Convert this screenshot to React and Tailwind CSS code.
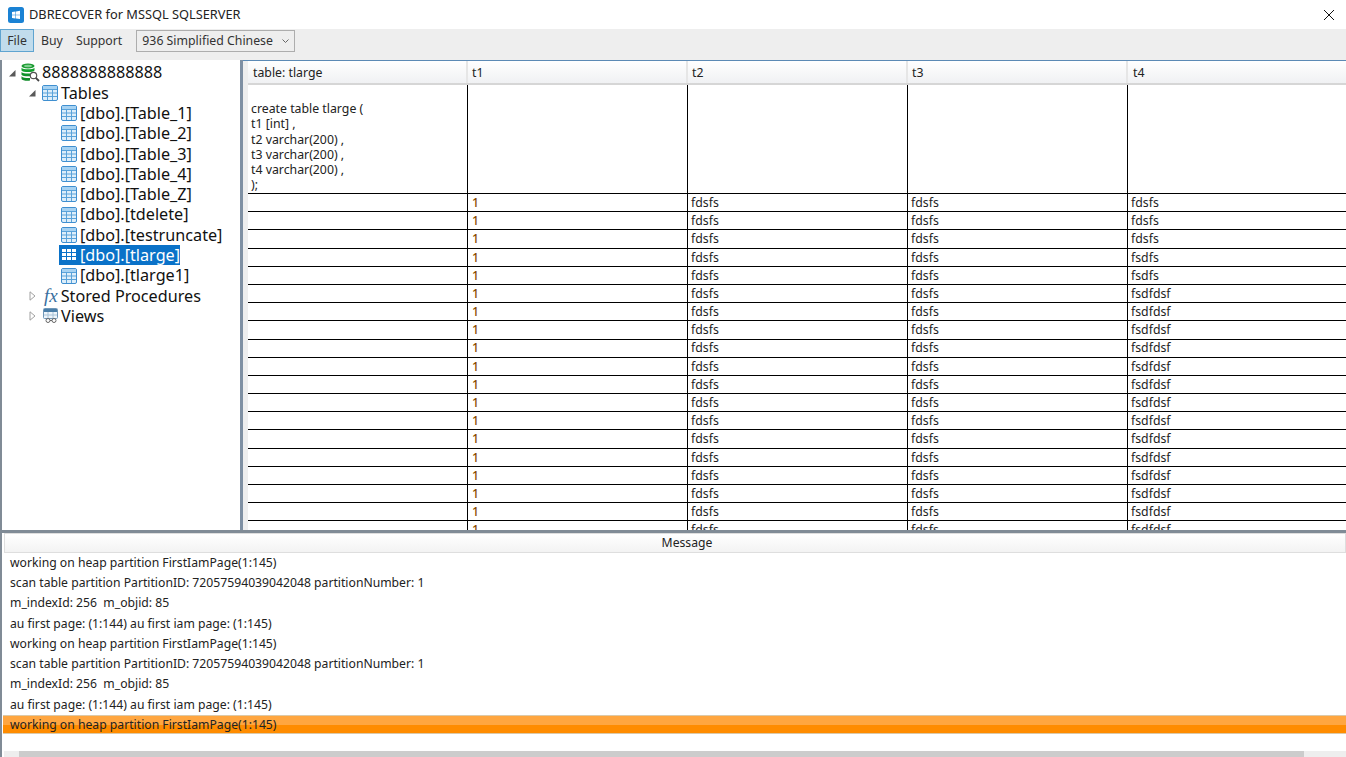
const tables = ["[dbo].[Table_1]","[dbo].[Table_2]","[dbo].[Table_3]","[dbo].[Table_4]","[dbo].[Table_Z]","[dbo].[tdelete]","[dbo].[testruncate]","[dbo].[tlarge]","[dbo].[tlarge1]"];
const logs = ["working on heap partition FirstIamPage(1:145)","scan table partition PartitionID: 72057594039042048 partitionNumber: 1","m_indexId: 256  m_objid: 85","au first page: (1:144) au first iam page: (1:145)","working on heap partition FirstIamPage(1:145)","scan table partition PartitionID: 72057594039042048 partitionNumber: 1","m_indexId: 256  m_objid: 85","au first page: (1:144) au first iam page: (1:145)"];
const rows = Array.from({length:19},(_,i)=>i<3?["fdsfs","fdsfs","fdsfs"]:i<5?["fdsfs","fdsfs","fsdfs"]:["fdsfs","fdsfs","fsdfdsf"]);

function TableIcon({selected}) {
  if (selected) {
    return (
      <svg width="16" height="16" viewBox="0 0 16 16" className="shrink-0">
        <g fill="#ffffff">
          <rect x="1" y="2" width="4" height="3" /><rect x="6" y="2" width="4" height="3" /><rect x="11" y="2" width="4" height="3" />
          <rect x="1" y="6" width="4" height="3" /><rect x="6" y="6" width="4" height="3" /><rect x="11" y="6" width="4" height="3" />
          <rect x="1" y="10" width="4" height="3" /><rect x="6" y="10" width="4" height="3" /><rect x="11" y="10" width="4" height="3" />
        </g>
      </svg>
    );
  }
  return (
    <svg width="16" height="16" viewBox="0 0 16 16" className="shrink-0">
      <rect x="0.500" y="0.500" width="15" height="15" rx="1.500" fill="#ddeefa" stroke="#3f8fd0" />
      <rect x="1" y="1" width="14" height="3.500" fill="#a6d2f2" />
      <path d="M1 4.500h14M1 8h14M1 11.500h14M5.500 4v11M10.500 4v11" stroke="#5aa3da" strokeWidth="1" fill="none" />
    </svg>
  );
}
function DbIcon() {
  return (
    <svg width="20" height="20" viewBox="0 0 20 20" className="shrink-0">
      <ellipse cx="7" cy="3" rx="6.500" ry="2.600" fill="#1c9a32" />
      <ellipse cx="7" cy="3" rx="4" ry="1.200" fill="#7fd08f" />
      <path d="M.5 4.800c1.500 2 11.500 2 13 0v2.800c-1.500 2-11.500 2-13 0z" fill="#12a02e" />
      <path d="M.5 9c1.500 2 11.500 2 13 0v2.800c-1.500 2-11.500 2-13 0z" fill="#0f9229" />
      <path d="M.5 13.200c1.500 2 7 2 8.500 1.800v2.500c-3 .5-8 0-8.500-1.600z" fill="#0f8a28" />
      <circle cx="12.500" cy="12.500" r="3.200" fill="#ffffff" stroke="#555555" strokeWidth="1.200" />
      <path d="M14.800 14.800L18 18" stroke="#444444" strokeWidth="1.800" />
    </svg>
  );
}
function ViewsIcon() {
  return (
    <svg width="16" height="16" viewBox="0 0 16 16" className="shrink-0">
      <rect x="0.500" y="0.500" width="14" height="10" rx="1" fill="#eef5fb" stroke="#6f97b8" />
      <rect x="1" y="1" width="13" height="3" fill="#4a7ea8" />
      <path d="M1 7h13M5 4v6M10 4v6" stroke="#a8c3d8" />
      <circle cx="5" cy="12.500" r="2" fill="#ffffff" stroke="#666666" />
      <circle cx="11" cy="12.500" r="2" fill="#ffffff" stroke="#666666" />
      <path d="M7 12.500h2" stroke="#666666" />
    </svg>
  );
}
function Open() {
  return <svg width="8" height="8" viewBox="0 0 8 8" className="shrink-0"><path d="M7.500 1v6.500H1z" fill="#595959" /></svg>;
}
function Closed() {
  return <svg width="7" height="10" viewBox="0 0 7 10" className="shrink-0"><path d="M1 .8L6 5 1 9.200z" fill="#ffffff" stroke="#a0a0a0" /></svg>;
}

export default function App() {
  return (
    <div className="w-[1346px] h-[757px] overflow-hidden bg-white flex flex-col text-[#1a1a1a] font-['Noto_Sans','Open_Sans',sans-serif]">
      <div className="h-[29px] shrink-0 flex items-center pl-[8px] pr-[11px]">
        <svg width="16" height="16" viewBox="0 0 16 16" className="shrink-0">
          <rect width="16" height="16" rx="2.500" fill="#1a82d4" />
          <path d="M4 5l3.500-.5V7.700H4zM8 4.400l4-.6v3.900H8zM4 8.200h3.500v3.200L4 11zM8 8.200h4V12l-4-.6z" fill="#ffffff" />
        </svg>
        <span className="ml-[5px] text-[12.800px] leading-none text-[#222]">DBRECOVER for MSSQL SQLSERVER</span>
        <svg width="12" height="12" viewBox="0 0 12 12" className="ml-auto"><path d="M1 1l10 10M11 1L1 11" stroke="#111" strokeWidth="1" /></svg>
      </div>
      <div className="h-[31px] shrink-0 bg-[#eeeeee] flex items-start text-[12.300px] text-[#333]">
        <div className="h-[23px] w-[34px] flex items-center justify-center pt-px bg-[#c1dcec] border border-[#5fa4d0]">File</div>
        <div className="h-[23px] ml-[7px] flex items-center pt-[2px]">Buy</div>
        <div className="h-[23px] ml-[13px] flex items-center pt-[2px]">Support</div>
        <div className="h-[22px] w-[159px] ml-[14px] mt-px flex items-center pl-[5px] border border-[#adadad] bg-[#eeeeee]">
          <span>936 Simplified Chinese</span>
          <svg width="7" height="5" viewBox="0 0 7 5" className="ml-auto mr-[5px]"><path d="M.5.500l3 3 3-3" fill="none" stroke="#666" /></svg>
        </div>
      </div>
      <div className="h-[470px] shrink-0 flex">
        <div className="w-[240px] shrink-0 border-l-2 border-[#808b96] pt-[2.400px] text-[16.200px] leading-[20.300px] text-[#111]">
          <div className="h-[20.300px] flex items-center pl-[6px]"><Open /><span className="ml-[5px]"><DbIcon /></span><span className="ml-px">8888888888888</span></div>
          <div className="h-[20.300px] flex items-center pl-[26px]"><Open /><span className="ml-[6px]"><TableIcon /></span><span className="ml-[3px]">Tables</span></div>
          {tables.map((t) => {
            const sel = t === "[dbo].[tlarge]";
            return (
              <div key={t} className="h-[20.300px] flex items-center pl-[57px]">
                <div className={"flex items-center h-[20px] pl-[2px] " + (sel ? "bg-[#0a72c8] text-white" : "")}>
                  <TableIcon selected={sel} />
                  <span className="ml-[3px]">{t}</span>
                </div>
              </div>
            );
          })}
          <div className="h-[20.300px] flex items-center pl-[27px]"><Closed /><span className="ml-[8px] font-['Liberation_Serif',serif] italic text-[#3a6f9e] text-[19px]">fx</span><span className="ml-[3px]">Stored Procedures</span></div>
          <div className="h-[20.300px] flex items-center pl-[27px]"><Closed /><span className="ml-[7px]"><ViewsIcon /></span><span className="ml-[2px]">Views</span></div>
        </div>
        <div className="w-[3px] shrink-0 bg-[#7f90a3]" />
        <div className="flex-1 min-w-0 border-t border-t-[#5c8ab5] flex overflow-hidden">
          <div className="w-[5px] shrink-0 bg-[#eeeeee]" />
          <div className="flex-1 min-w-0 text-[12.300px] text-[#222]">
            <div className="h-[24px] flex bg-gradient-to-b from-white to-[#f0f1f3] border-b-2 border-[#d6d6d6]">
              {["table: tlarge","t1","t2","t3","t4"].map((h,i)=>(
                <div key={h} className={"h-full flex items-center pt-[3px] " + (i===0 ? "w-[220px] pl-[5px] border-r-2 border-[#e6e6e6]" : i===4 ? "flex-1 pl-[5px]" : "w-[220px] pl-[4px] border-r-2 border-[#e6e6e6]")}>{h}</div>
              ))}
            </div>
            <div className="h-[109px] flex border-b border-black">
              <div className="w-[220px] border-r border-black pl-[3px] pt-[16px] leading-[15.300px]">
                <div>create table tlarge (</div><div>t1 [int] ,</div><div>t2 varchar(200) ,</div><div>t3 varchar(200) ,</div><div>t4 varchar(200) ,</div><div>);</div>
              </div>
              <div className="w-[220px] border-r border-black" />
              <div className="w-[220px] border-r border-black" />
              <div className="w-[220px] border-r border-black" />
            </div>
            <div>
              {rows.map((r,i)=>(
                <div key={i} className="h-[18.200px] flex border-b border-black leading-none">
                  <div className="w-[220px] border-r border-black" />
                  <div className="w-[220px] border-r border-black pl-[4px] pt-px flex items-center font-medium text-[#8a4b00]">1</div>
                  <div className="w-[220px] border-r border-black pl-[3px] pt-px flex items-center">{r[0]}</div>
                  <div className="w-[220px] border-r border-black pl-[3px] pt-px flex items-center">{r[1]}</div>
                  <div className="flex-1 pl-[3px] pt-px flex items-center">{r[2]}</div>
                </div>
              ))}
            </div>
          </div>
        </div>
      </div>
      <div className="h-[3px] shrink-0 bg-[#808b96]" />
      <div className="h-[224px] shrink-0 border-l-2 border-[#808b96] pl-[2px] flex flex-col text-[12.200px] text-[#222]">
        <div className="h-[20px] shrink-0 flex items-center justify-center bg-gradient-to-b from-white to-[#f3f3f3] border border-[#dedede] pl-[24px]">Message</div>
        <div className="h-[180px] shrink-0">
          {logs.map((l,i)=><div key={i} className="h-[20.250px] flex items-center pl-[6px] whitespace-pre">{l}</div>)}
          <div className="h-[19px] -ml-[1px] border-y border-[#dcc9a8] bg-gradient-to-b from-[#ffa640] from-50% to-[#ff8c00] to-50% flex items-center pl-[7px] pt-px">working on heap partition FirstIamPage(1:145)</div>
        </div>
        <div className="h-[18px] shrink-0" />
        <div className="h-[6px] shrink-0 flex bg-[#eeeeee]">
          <div className="w-[15px] shrink-0" />
          <div className="w-[1285px] shrink-0 bg-[#cccccc]" />
          <div className="flex-1" />
        </div>
      </div>
    </div>
  );
}
